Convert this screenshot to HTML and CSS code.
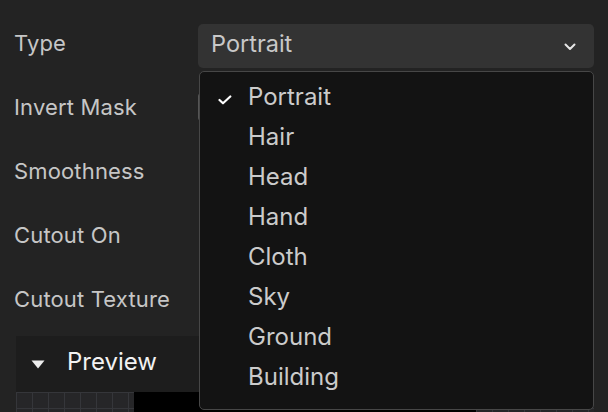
FILE: index.html
```html
<!DOCTYPE html>
<html>
<head>
<meta charset="utf-8">
<link rel="stylesheet" href="styles.css">
</head>
<body>
<div class="panel">
  <div class="rows">
    <div class="row">
      <span class="label">Type</span>
      <div class="select">
        <span>Portrait</span>
        <svg class="chev" width="12" height="8" viewBox="0 0 12 8"><path d="M1.5 1.5 L6 6 L10.5 1.5" fill="none" stroke="#e6e6e6" stroke-width="2" stroke-linecap="round" stroke-linejoin="round"/></svg>
      </div>
    </div>
    <div class="row">
      <span class="label">Invert Mask</span>
      <div class="checkbox"></div>
    </div>
    <div class="row"><span class="label">Smoothness</span></div>
    <div class="row"><span class="label">Cutout On</span></div>
    <div class="row"><span class="label">Cutout Texture</span></div>
  </div>
  <div class="preview-head">
    <svg class="tri" width="14" height="9" viewBox="0 0 14 9"><path d="M0.5 0.5 L13.5 0.5 L7 8.5 Z" fill="#ededed"/></svg>
    <span class="preview-title">Preview</span>
  </div>
  <div class="preview-body">
    <div class="checker"></div>
    <div class="black"></div>
    <div class="checker grow"></div>
  </div>

  <ul class="menu">
    <li class="item"><svg class="check" width="14" height="10" viewBox="0 0 14 10"><path d="M1.5 5 L5 8.3 L12.3 1.5" fill="none" stroke="#ffffff" stroke-width="2.2" stroke-linecap="round" stroke-linejoin="round"/></svg><span>Portrait</span></li>
    <li class="item"><span>Hair</span></li>
    <li class="item"><span>Head</span></li>
    <li class="item"><span>Hand</span></li>
    <li class="item"><span>Cloth</span></li>
    <li class="item"><span>Sky</span></li>
    <li class="item"><span>Ground</span></li>
    <li class="item"><span>Building</span></li>
  </ul>
</div>
</body>
</html>
```

FILE: styles.css
```css
* { box-sizing: border-box; }
html, body {
  margin: 0;
  padding: 0;
  background: #232323;
  width: 608px;
  height: 412px;
  overflow: hidden;
  font-family: Inter, "Noto Sans", sans-serif;
}
.panel {
  position: relative;
  width: 608px;
  height: 412px;
  padding: 11px 14px 0 14px;
}
.rows {
  display: flex;
  flex-direction: column;
}
.row {
  height: 64px;
  display: flex;
  align-items: center;
}
.label {
  width: 184px;
  font-size: 22px;
  letter-spacing: 0.15px;
  color: #c6c6c6;
  flex: none;
}
.select {
  flex: none;
  width: 396px;
  height: 44px;
  margin-top: 6px;
  background: #333333;
  border-radius: 5px;
  display: flex;
  align-items: center;
  justify-content: space-between;
  padding: 0 18px 5px 13px;
  font-size: 23.5px;
  color: #c8c8c8;
}
.chev { display: block; margin-top: 6px; }
.checkbox {
  width: 28px;
  height: 28px;
  background: #3a3a3a;
  border: 1px solid #555;
  border-radius: 3px;
}
.preview-head {
  margin: 5px 0 0 2px;
  width: 578px;
  height: 56px;
  background: #1d1d1d;
  display: flex;
  align-items: center;
  padding-left: 15px;
}
.tri { display: block; margin-top: 1px; }
.preview-title {
  margin-left: 22px;
  margin-bottom: 5px;
  font-size: 24px;
  color: #f2f2f2;
}
.preview-body {
  margin-left: 2px;
  width: 578px;
  height: 40px;
  display: flex;
}
.checker {
  width: 118px;
  background-color: #262628;
  background-image:
    linear-gradient(to right, #35363a 1px, transparent 1px),
    linear-gradient(to bottom, #35363a 1px, transparent 1px);
  background-size: 16px 16px;
}
.checker.grow { flex: 1; }
.black { width: 342px; background: #000; }
.menu {
  position: absolute;
  left: 199px;
  top: 71px;
  width: 395px;
  height: 339px;
  margin: 0;
  padding: 4px 0 0 0;
  list-style: none;
  background: #131313;
  border: 1px solid #474747;
  border-radius: 5px;
}
.item {
  height: 40px;
  display: flex;
  align-items: center;
  position: relative;
  padding-left: 48px;
  font-size: 24px;
  color: #cbcbcb;
}
.check {
  position: absolute;
  left: 18px;
  top: 19px;
}
```
